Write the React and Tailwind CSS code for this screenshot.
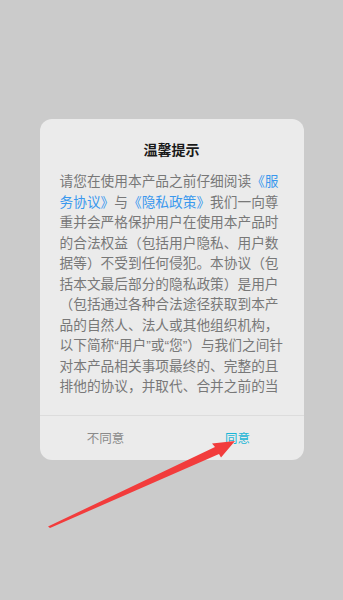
import React from "react";

const lines = [
  [["请您在使用本产品之前仔细阅读", false], ["《服", true]],
  [["务协议》", true], ["与", false], ["《隐私政策》", true], ["我们一向尊", false]],
  [["重并会严格保护用户在使用本产品时", false]],
  [["的合法权益（包括用户隐私、用户数", false]],
  [["据等）不受到任何侵犯。本协议（包", false]],
  [["括本文最后部分的隐私政策）是用户", false]],
  [["（包括通过各种合法途径获取到本产", false]],
  [["品的自然人、法人或其他组织机构，", false]],
  [["以下简称“用户”或“您”）与我们之间针", false]],
  [["对本产品相关事项最终的、完整的且", false]],
  [["排他的协议，并取代、合并之前的当", false]],
];

export default function App() {
  return (
    <div
      className="relative min-h-[600px] w-full bg-[#cbcbcb] pt-[119px]"
      style={{ fontFamily: '"Liberation Sans", "Noto Sans CJK SC", sans-serif' }}
    >
      <div className="mx-auto w-[264px] rounded-[12px] bg-[#ebebeb]">
        <div className="pt-[21px] text-center text-[14px] leading-[20px] font-bold text-[#1a1a1a]">
          温馨提示
        </div>
        <div className="mt-[12px] h-[226px] overflow-hidden px-[20px] text-[13.7px] leading-[20.5px] text-[#787878]">
          {lines.map((parts, i) => (
            <div key={i} className="whitespace-nowrap">
              {parts.map(([t, link], j) => (
                <span key={j} className={link ? "text-[#3a98ee]" : ""}>
                  {t}
                </span>
              ))}
            </div>
          ))}
        </div>
        <div className="mt-[17px] flex h-[45px] border-t border-[#dcdcdc] pt-[2px]">
          <div className="flex flex-1 items-center justify-center text-[12.5px] text-[#8a8a8a]">
            不同意
          </div>
          <div className="flex flex-1 items-center justify-center text-[12.5px] text-[#19b5d6]">
            同意
          </div>
        </div>
      </div>
      <svg
        className="pointer-events-none absolute left-0 top-0"
        width="343"
        height="600"
        viewBox="0 0 343 600"
      >
        <polygon
          points="48,526.5 215,447 212,443.5 235,441 221,457.5 219,454 50,528"
          fill="#f23c3c"
        />
      </svg>
    </div>
  );
}
